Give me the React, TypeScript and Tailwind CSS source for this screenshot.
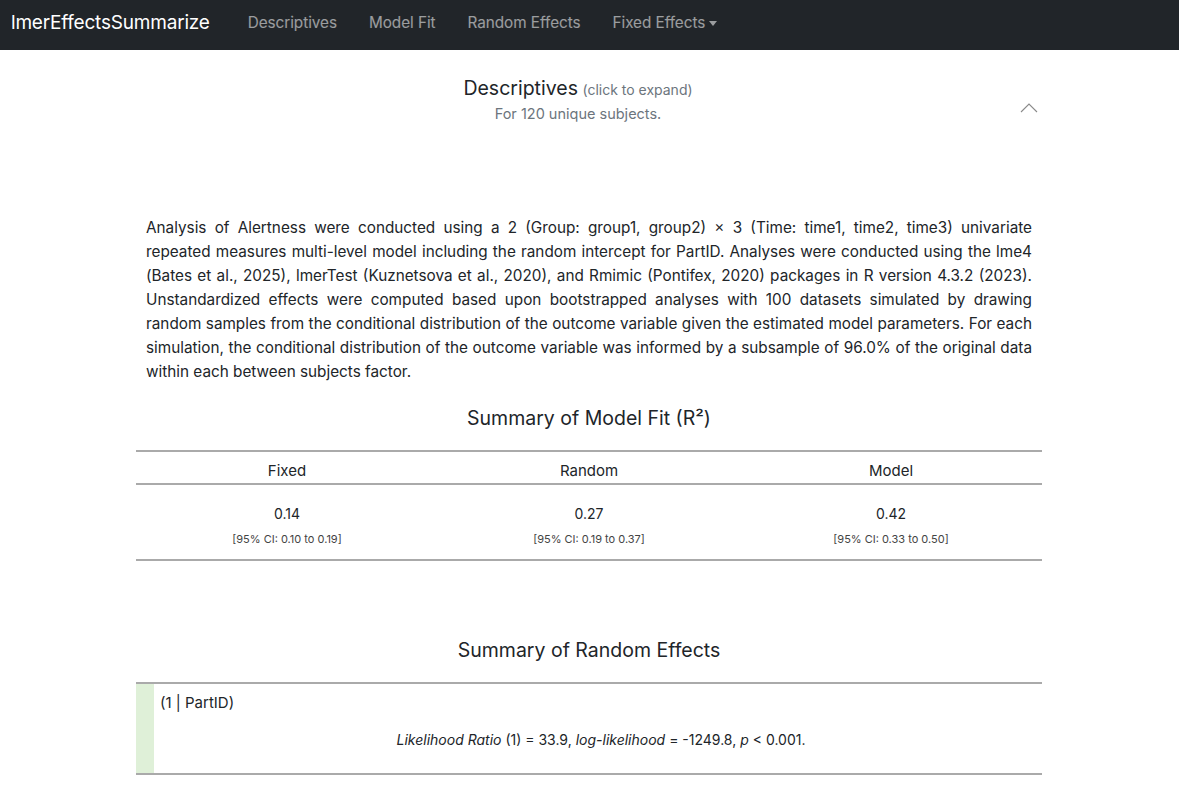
export default function App() {
  const fit = [
    { label: "Fixed", value: "0.14", ci: "[95% CI: 0.10 to 0.19]" },
    { label: "Random", value: "0.27", ci: "[95% CI: 0.19 to 0.37]" },
    { label: "Model", value: "0.42", ci: "[95% CI: 0.33 to 0.50]" },
  ];

  return (
    <div className="min-h-[796px] bg-white font-['Inter','Noto_Sans',sans-serif] text-[#212529]">
      <nav className="flex h-[50px] items-center bg-[#212529] px-[11px] pb-[4px]">
        <span className="mr-[38px] text-[19px] tracking-[-0.2px] text-white">lmerEffectsSummarize</span>
        <div className="flex items-center gap-[32px] text-[15.3px] tracking-[-0.05px] text-white/55">
          <span>Descriptives</span>
          <span>Model Fit</span>
          <span>Random Effects</span>
          <span className="flex items-center gap-[4px]">
            Fixed Effects
            <span className="h-0 w-0 border-x-[4px] border-t-[5px] border-x-transparent border-t-white/55" />
          </span>
        </div>
      </nav>

      <main className="ml-[136px] w-[906px]">
        <section className="flex items-start pt-[25px]">
          <div className="flex-1 text-center">
            <div className="leading-[26px]">
              <span className="text-[19.5px]">Descriptives</span>{" "}
              <span className="text-[14px] text-[#6c757d]">(click to expand)</span>
            </div>
            <div className="text-[14.5px] text-[#6c757d]">For 120 unique subjects.</div>
          </div>
          <svg className="mt-[28px] mr-[4px]" width="18" height="10" viewBox="0 0 18 10" fill="none">
            <path d="M1 9 L9 1 L17 9" stroke="#8a8a8a" strokeWidth="1.1" />
          </svg>
        </section>

        <p className="mt-[91px] px-[10px] text-justify text-[15.3px] leading-[24px]">
          Analysis of Alertness were conducted using a 2 (Group: group1, group2) × 3 (Time: time1,
          time2, time3) univariate repeated measures multi-level model including the random intercept
          for PartID. Analyses were conducted using the lme4 (Bates et al., 2025), lmerTest (Kuznetsova
          et al., 2020), and Rmimic (Pontifex, 2020) packages in R version 4.3.2 (2023). Unstandardized
          effects were computed based upon bootstrapped analyses with 100 datasets simulated by drawing
          random samples from the conditional distribution of the outcome variable given the estimated
          model parameters. For each simulation, the conditional distribution of the outcome variable
          was informed by a subsample of 96.0% of the original data within each between subjects
          factor.
        </p>

        <h2 className="mt-[21px] text-center text-[19.5px] leading-[26px]">Summary of Model Fit (R²)</h2>

        <div className="mt-[19px] border-y-2 border-[#aaaaaa]">
          <div className="grid h-[33px] grid-cols-3 border-b-2 border-[#aaaaaa] pt-[9px] text-center text-[15px] leading-[20px]">
            {fit.map((f) => (
              <span key={f.label}>{f.label}</span>
            ))}
          </div>
          <div className="grid h-[74px] grid-cols-3 text-center">
            {fit.map((f) => (
              <div key={f.label} className="flex flex-col items-center pt-[20px]">
                <span className="text-[14px] leading-[18px]">{f.value}</span>
                <span className="mt-[9px] text-[11px] leading-[14px] text-[#444]">{f.ci}</span>
              </div>
            ))}
          </div>
        </div>

        <h2 className="mt-[76px] text-center text-[19.5px] leading-[26px]">Summary of Random Effects</h2>

        <div className="mt-[19px] flex border-y-2 border-[#aaaaaa]">
          <div className="w-[18px] shrink-0 bg-[#dff0d8]" />
          <div className="h-[89px] flex-1 pl-[6px]">
            <div className="pt-[9px] text-[15px] leading-[20px]">(1 | PartID)</div>
            <div className="mt-[18px] text-center text-[14px] leading-[18px]">
              <i>Likelihood Ratio</i> (1) = 33.9, <i>log-likelihood</i> = -1249.8, <i>p</i> &lt; 0.001.
            </div>
          </div>
        </div>
      </main>
    </div>
  );
}
